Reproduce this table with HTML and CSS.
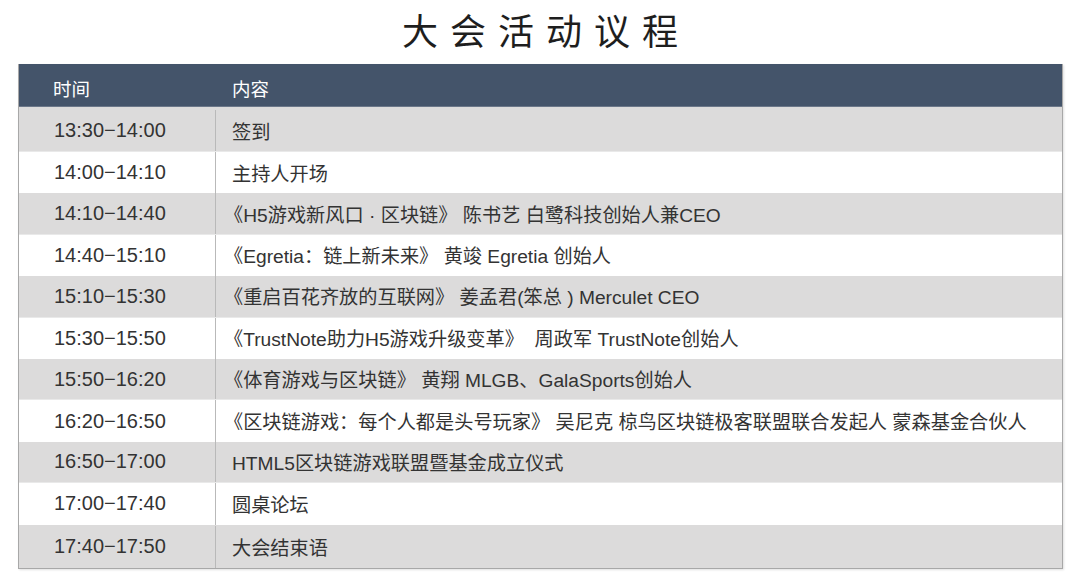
FILE: index.html
```html
<!DOCTYPE html>
<html lang="zh-CN">
<head>
<meta charset="utf-8">
<title>大会活动议程</title>
<link rel="stylesheet" href="styles.css">
</head>
<body>
<div class="page">
  <h1 class="title">大会活动议程</h1>
  <div class="agenda">
    <div class="row head"><div class="time">时间</div><div class="content">内容</div></div>
    <div class="row odd first"><div class="time">13:30−14:00</div><div class="content">签到</div></div>
    <div class="row"><div class="time">14:00−14:10</div><div class="content">主持人开场</div></div>
    <div class="row odd"><div class="time">14:10−14:40</div><div class="content quote">《H5游戏新风口 · 区块链》 陈书艺 白鹭科技创始人兼CEO</div></div>
    <div class="row"><div class="time">14:40−15:10</div><div class="content quote">《Egretia：链上新未来》 黄竣 Egretia 创始人</div></div>
    <div class="row odd"><div class="time">15:10−15:30</div><div class="content quote">《重启百花齐放的互联网》 姜孟君(笨总 ) Merculet CEO</div></div>
    <div class="row"><div class="time">15:30−15:50</div><div class="content quote">《TrustNote助力H5游戏升级变革》&nbsp; 周政军 TrustNote创始人</div></div>
    <div class="row odd"><div class="time">15:50−16:20</div><div class="content quote">《体育游戏与区块链》 黄翔 MLGB、GalaSports创始人</div></div>
    <div class="row"><div class="time">16:20−16:50</div><div class="content quote">《区块链游戏：每个人都是头号玩家》 吴尼克 椋鸟区块链极客联盟联合发起人 蒙森基金合伙人</div></div>
    <div class="row odd"><div class="time">16:50−17:00</div><div class="content">HTML5区块链游戏联盟暨基金成立仪式</div></div>
    <div class="row"><div class="time">17:00−17:40</div><div class="content">圆桌论坛</div></div>
    <div class="row odd last"><div class="time">17:40−17:50</div><div class="content">大会结束语</div></div>
  </div>
</div>
</body>
</html>
```

FILE: styles.css
```css
* { box-sizing: border-box; }
html, body { margin: 0; padding: 0; background: #ffffff; }
body {
  width: 1080px;
  height: 583px;
  overflow: hidden;
  font-family: "Liberation Sans", "Noto Sans CJK SC", sans-serif;
  color: #333333;
}
.page {
  display: flex;
  flex-direction: column;
  align-items: flex-start;
}
.title {
  align-self: stretch;
  margin: 0;
  height: 64px;
  display: flex;
  align-items: center;
  justify-content: center;
  padding: 0 0 6px 12px;
  font-family: "Noto Sans CJK SC", sans-serif;
  font-weight: 400;
  font-size: 36px;
  letter-spacing: 12px;
  color: #1e1e1e;
}
.agenda {
  margin-left: 18px;
  width: 1045px;
  border-left: 1px solid #a8a8a8;
  border-right: 1px solid #a8a8a8;
  border-bottom: 1px solid #a8a8a8;
  box-shadow: 1px 1px 2px rgba(0,0,0,0.12);
  display: flex;
  flex-direction: column;
}
.row {
  display: grid;
  grid-template-columns: 197px 1fr;
  height: 41.4px;
  background: #ffffff;
  align-items: stretch;
}
.row.odd { background: #dcdbdb; border-bottom: 1px solid #e9e9e9; }
.row.first { height: 45px; padding-top: 3px; }
.row.last { border-bottom: none; height: 43.5px; padding-top: 1px; }
.row.head {
  height: 43px;
  background: #44546a;
  color: #ffffff;
  border-bottom: 1px solid #6b7789;
}
.time, .content {
  display: flex;
  align-items: center;
  white-space: nowrap;
}
.time {
  padding-left: 35px;
  font-size: 20px;
  border-right: 1px solid #b9b9b9;
}
.content {
  padding-left: 16px;
  font-size: 19.2px;
}
.content.quote { padding-left: 8px; }
.row.head .time, .row.head .content {
  font-size: 18.5px;
  font-family: "Noto Sans CJK SC", sans-serif;
  padding-top: 6px;
}
.row.head .time { border-right: none; padding-left: 34px; }
```
